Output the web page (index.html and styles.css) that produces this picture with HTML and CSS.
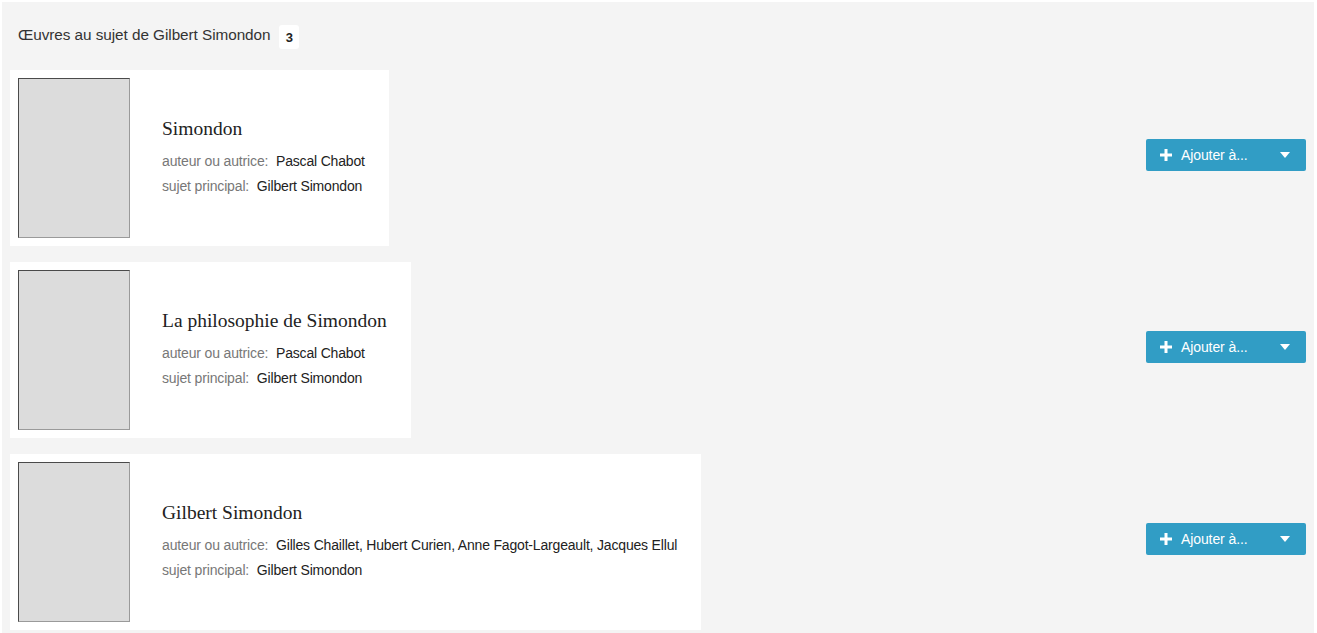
FILE: index.html
```html
<!DOCTYPE html>
<html lang="fr">
<head>
<meta charset="utf-8">
<title>Œuvres au sujet de Gilbert Simondon</title>
<link rel="stylesheet" href="styles.css">
</head>
<body>
<div class="page">
  <div class="head">
    <span class="head-title">Œuvres au sujet de Gilbert Simondon</span>
    <span class="badge">3</span>
  </div>
  <div class="list">
    <div class="row">
      <div class="card">
        <div class="cover"></div>
        <div class="info">
          <div class="title">Simondon</div>
          <div class="meta"><span class="label">auteur ou autrice:</span> <span class="value">Pascal Chabot</span></div>
          <div class="meta"><span class="label">sujet principal:</span> <span class="value">Gilbert Simondon</span></div>
        </div>
      </div>
      <button class="add">
        <svg class="plus" viewBox="0 0 12 12" width="12" height="12"><path d="M4.5 0h3v4.5H12v3H7.5V12h-3V7.5H0v-3h4.5z" fill="#fff"/></svg>
        <span class="add-text">Ajouter à...</span>
        <svg class="caret" viewBox="0 0 10 6" width="10" height="6"><path d="M0 0h10L5 6z" fill="#fff"/></svg>
      </button>
    </div>
    <div class="row">
      <div class="card">
        <div class="cover"></div>
        <div class="info">
          <div class="title">La philosophie de Simondon</div>
          <div class="meta"><span class="label">auteur ou autrice:</span> <span class="value">Pascal Chabot</span></div>
          <div class="meta"><span class="label">sujet principal:</span> <span class="value">Gilbert Simondon</span></div>
        </div>
      </div>
      <button class="add">
        <svg class="plus" viewBox="0 0 12 12" width="12" height="12"><path d="M4.5 0h3v4.5H12v3H7.5V12h-3V7.5H0v-3h4.5z" fill="#fff"/></svg>
        <span class="add-text">Ajouter à...</span>
        <svg class="caret" viewBox="0 0 10 6" width="10" height="6"><path d="M0 0h10L5 6z" fill="#fff"/></svg>
      </button>
    </div>
    <div class="row">
      <div class="card">
        <div class="cover"></div>
        <div class="info">
          <div class="title">Gilbert Simondon</div>
          <div class="meta"><span class="label">auteur ou autrice:</span> <span class="value">Gilles Chaillet, Hubert Curien, Anne Fagot-Largeault, Jacques Ellul</span></div>
          <div class="meta"><span class="label">sujet principal:</span> <span class="value">Gilbert Simondon</span></div>
        </div>
      </div>
      <button class="add">
        <svg class="plus" viewBox="0 0 12 12" width="12" height="12"><path d="M4.5 0h3v4.5H12v3H7.5V12h-3V7.5H0v-3h4.5z" fill="#fff"/></svg>
        <span class="add-text">Ajouter à...</span>
        <svg class="caret" viewBox="0 0 10 6" width="10" height="6"><path d="M0 0h10L5 6z" fill="#fff"/></svg>
      </button>
    </div>
  </div>
</div>
</body>
</html>
```
FILE: styles.css
```css
html, body {
  margin: 0;
  padding: 0;
  background: #ffffff;
}
body {
  font-family: "Liberation Sans Narrow", "Liberation Sans", sans-serif;
  color: #333333;
}
.page {
  margin: 2px 3px 0 2px;
  background: #f4f4f4;
  padding: 20px 8px 4px 8px;
  min-height: 620px;
  box-sizing: border-box;
}
.head {
  display: flex;
  align-items: center;
  gap: 9px;
  padding-left: 8px;
  height: 26px;
}
.head-title {
  font-size: 15.3px;
  letter-spacing: -0.05px;
  color: #333333;
}
.badge {
  display: inline-flex;
  align-items: center;
  justify-content: center;
  background: #ffffff;
  border-radius: 3px;
  width: 20px;
  height: 24px;
  font-size: 13px;
  font-weight: bold;
  color: #222222;
  margin-top: 4px;
}
.list {
  display: flex;
  flex-direction: column;
  gap: 16px;
  margin-top: 22px;
}
.row {
  display: flex;
  align-items: center;
  justify-content: space-between;
}
.card {
  display: flex;
  align-items: center;
  background: #ffffff;
  padding: 8px 24px 8px 8px;
}
.cover {
  width: 110px;
  height: 158px;
  background: #dcdcdc;
  border-top: 1px solid #4a4a4a;
  border-left: 1px solid #4a4a4a;
  border-right: 1px solid #9a9a9a;
  border-bottom: 1px solid #9a9a9a;
  flex: none;
}
.info {
  margin-left: 32px;
  padding-top: 1px;
  padding-bottom: 2px;
}
.title {
  font-family: "Liberation Serif", serif;
  font-size: 19.5px;
  color: #222222;
  line-height: 26px;
  margin-bottom: 7px;
}
.meta {
  font-size: 14px;
  letter-spacing: -0.15px;
  line-height: 25px;
  white-space: nowrap;
}
.label {
  color: #777777;
  margin-right: 4px;
}
.value {
  color: #222222;
  letter-spacing: -0.18px;
}
.add {
  display: flex;
  align-items: center;
  width: 160px;
  height: 32px;
  background: #319dc5;
  border: none;
  border-radius: 2px;
  padding: 0 0 0 14px;
  color: #ffffff;
  font-family: "Liberation Sans Narrow", "Liberation Sans", sans-serif;
  font-size: 14px;
  letter-spacing: -0.1px;
  margin-bottom: 6px;
  box-sizing: border-box;
}
.plus {
  flex: none;
}
.add-text {
  margin-left: 9px;
  flex: 1;
  text-align: left;
}
.caret {
  flex: none;
  margin-right: 16px;
}
```
